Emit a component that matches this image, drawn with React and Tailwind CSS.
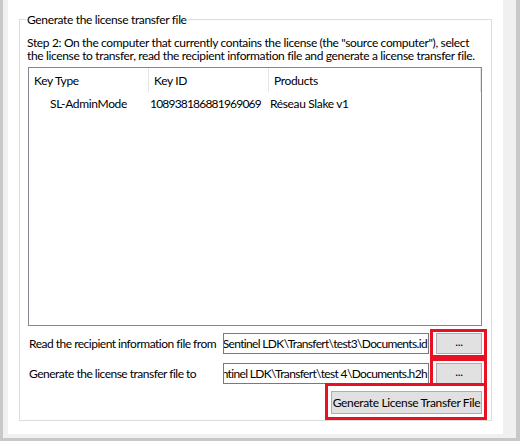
export default function App() {
  const font = { fontFamily: 'Lato, "Noto Sans", sans-serif' };

  return (
    <div
      className="relative w-[520px] h-[441px] bg-[#c8c8c8] pl-[3px] pr-[4px] pb-[3px] text-[12px] leading-[13px] tracking-[-0.35px] text-black overflow-hidden"
      style={font}
    >
      <div className="h-full bg-[#f0f0f0] pl-[5px] pr-[13px] pb-[4px]">
        <div className="h-full bg-white pt-[19px] px-[11px] pb-[13px]">
          {/* group box */}
          <div className="relative h-full border border-[#dcdcdc] pt-[16px] pl-[7px] pr-[9px]">
            <span className="absolute -top-[8px] left-[6px] bg-white px-[1px] leading-[15px]">
              Generate the license transfer file
            </span>

            <p className="leading-[13px] whitespace-nowrap">
              Step 2: On the computer that currently contains the license (the "source computer"), select
              <br />
              the license to transfer, read the recipient information file and generate a license transfer file.
            </p>

            {/* list view */}
            <div className="ml-[1px] mt-[5px] h-[259px] border border-[#828790] bg-white">
              <div className="flex h-[24px] items-center">
                <div className="w-[120px] h-full flex items-center pl-[5px] border-r border-[#e5e5e5]">Key Type</div>
                <div className="w-[120px] h-full flex items-center pl-[5px] border-r border-[#e5e5e5]">Key ID</div>
                <div className="flex-1 h-full flex items-center pl-[5px] border-r border-[#e5e5e5]">Products</div>
              </div>
              <div className="flex h-[17px] items-center mt-[3px] whitespace-nowrap">
                <div className="w-[120px] pl-[21px]">SL-AdminMode</div>
                <div className="w-[120px] pl-[1px] tracking-[-0.8px]">108938186881969069</div>
                <div className="flex-1 pl-[1px]">Réseau Slake v1</div>
              </div>
            </div>

            {/* file rows */}
            <div className="mt-[7px] flex items-center h-[21px]">
              <span className="w-[196px] shrink-0 pl-[2px] whitespace-nowrap tracking-[-0.5px]">
                Read the recipient information file from
              </span>
              <div className="w-[206px] shrink-0 h-[21px] border border-[#7a7a7a] flex justify-end items-center overflow-hidden pr-[1px] whitespace-nowrap tracking-[-0.65px]">
                Sentinel LDK\Transfert\test3\Documents.id
              </div>
              <button className="ml-[7px] shrink-0 w-[46px] h-[21px] bg-[#e1e1e1] border border-[#adadad] leading-none pb-[4px]">
                ...
              </button>
            </div>

            <div className="mt-[9px] flex items-center h-[21px]">
              <span className="w-[196px] shrink-0 pl-[2px] whitespace-nowrap tracking-[-0.5px]">
                Generate the license transfer file to
              </span>
              <div className="w-[206px] shrink-0 h-[21px] border border-[#7a7a7a] flex justify-end items-center overflow-hidden pr-[1px] whitespace-nowrap tracking-[-0.65px]">
                ntinel LDK\Transfert\test 4\Documents.h2h
              </div>
              <button className="ml-[7px] shrink-0 w-[46px] h-[21px] bg-[#e1e1e1] border border-[#adadad] leading-none pb-[4px]">
                ...
              </button>
            </div>

            <div className="mt-[7px] flex justify-end">
              <button className="w-[151px] h-[23px] bg-[#e1e1e1] border border-[#adadad] whitespace-nowrap">
                Generate License Transfer File
              </button>
            </div>
          </div>
        </div>
      </div>

      {/* red annotation boxes */}
      <div className="absolute left-[430px] top-[329px] w-[57px] h-[29px] border-[3px] border-[#e81123]" />
      <div className="absolute left-[430px] top-[358px] w-[57px] h-[28px] border-[3px] border-[#e81123]" />
      <div className="absolute left-[325px] top-[383px] w-[162px] h-[37px] border-[3px] border-[#e81123]" />
    </div>
  );
}
